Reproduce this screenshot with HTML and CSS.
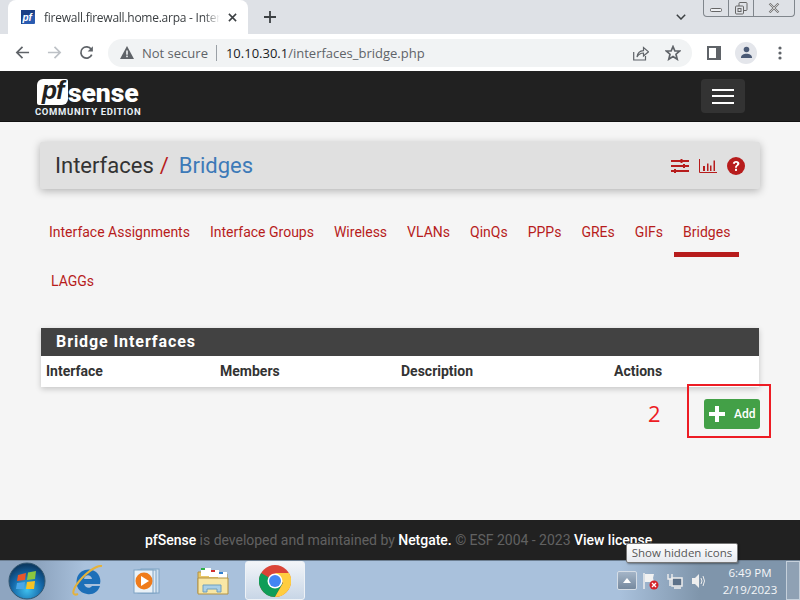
FILE: index.html
```html
<!DOCTYPE html>
<html lang="en">
<head>
<meta charset="utf-8">
<title>pfSense Bridges</title>
<link rel="stylesheet" href="styles.css">
</head>
<body>
<div class="screen">
  <div class="tabstrip">
    <div class="tab">
      <svg class="favicon" viewBox="0 0 14 14"><rect width="14" height="14" rx="1" fill="#2a5bb0"/><path d="M0 0H14L13 5H4L1 14H0Z" fill="#1b3f85"/><text x="1.5" y="11" class="fav-text">pf</text></svg>
      <span class="tab-title">firewall.firewall.home.arpa - Interf</span>
      <svg class="tab-close" viewBox="0 0 10 10"><path d="M1 1L9 9M9 1L1 9" stroke="#3c4043" stroke-width="1.7"/></svg>
    </div>
    <svg class="new-tab" viewBox="0 0 12 12"><path d="M6 0V12M0 6H12" stroke="#3c4043" stroke-width="1.8"/></svg>
    <div class="strip-fill"></div>
    <svg class="tab-menu" viewBox="0 0 10 6"><path d="M.8.8L5 5L9.2.8" fill="none" stroke="#3c4043" stroke-width="1.5"/></svg>
    <div class="window-btns">
      <div class="win-btn"><svg viewBox="0 0 12 4" class="win-min"><rect x=".5" y=".5" width="11" height="3" rx="1" fill="#eef0f3" stroke="#666"/></svg></div>
      <div class="win-btn"><svg viewBox="0 0 13 13" class="win-max"><rect x="4" y=".5" width="8" height="8" rx="1" fill="none" stroke="#666"/><rect x=".5" y="4" width="8" height="8" rx="1" fill="#dee1e6" stroke="#666"/><rect x="3" y="6.5" width="3" height="3" fill="none" stroke="#666"/></svg></div>
      <div class="win-btn win-close"><svg viewBox="0 0 12 10" class="win-x"><path d="M1.5 .5L10.5 9.5M10.5 .5L1.5 9.5" stroke="#777" stroke-width="2.2"/><path d="M1.5 .5L10.5 9.5M10.5 .5L1.5 9.5" stroke="#eee" stroke-width=".7"/></svg></div>
    </div>
  </div>

  <div class="toolbar">
    <svg class="tool-icon back" viewBox="0 0 16 16"><path d="M15 8H2M8 2L2 8L8 14" fill="none" stroke="#5f6368" stroke-width="1.8"/></svg>
    <svg class="tool-icon forward" viewBox="0 0 16 16"><path d="M1 8H14M8 2L14 8L8 14" fill="none" stroke="#bdc1c6" stroke-width="1.8"/></svg>
    <svg class="tool-icon reload" viewBox="0 0 16 16"><path d="M13.6 10.2A6 6 0 1 1 13 4.6" fill="none" stroke="#5f6368" stroke-width="1.8"/><path d="M14.8 1.2V6.8H9.2Z" fill="#5f6368"/></svg>
    <div class="omnibox">
      <svg class="warn" viewBox="0 0 14 13"><path d="M7 0L14 13H0Z" fill="#5f6368"/><rect x="6.2" y="4.5" width="1.6" height="4.2" fill="#f1f3f4"/><rect x="6.2" y="9.6" width="1.6" height="1.6" fill="#f1f3f4"/></svg>
      <span class="not-secure">Not secure</span>
      <span class="omni-sep"></span>
      <span class="url"><span class="url-host">10.10.30.1</span>/interfaces_bridge.php</span>
      <span class="omni-fill"></span>
      <svg class="share" viewBox="0 0 16 16"><path d="M.7 7V15H12.5V11" fill="none" stroke="#5f6368" stroke-width="1.2"/><path d="M4 12C4.5 8 7 5.8 10.5 5.6V2.5L15.5 6.8L10.5 11V8C8 8 5.5 9.5 4 12Z" fill="none" stroke="#5f6368" stroke-width="1.2"/></svg>
      <svg class="star" viewBox="0 0 16 16"><path d="M8 1.6L9.9 6H14.8L11 9.2L12.2 14.2L8 11.5L3.8 14.2L5 9.2L1.2 6H6.1Z" fill="none" stroke="#5f6368" stroke-width="1.7"/></svg>
    </div>
    <svg class="side-panel" viewBox="0 0 14 14"><path d="M0 0H14V14H0ZM2 2V12H9V2Z" fill="#5f6368" fill-rule="evenodd"/></svg>
    <div class="avatar"><svg viewBox="0 0 14 14" class="avatar-icon"><circle cx="7" cy="3.8" r="3" fill="#4b5a75"/><path d="M1 13C1 9.5 4 8.3 7 8.3S13 9.5 13 13Z" fill="#4b5a75"/></svg></div>
    <svg class="kebab" viewBox="0 0 4 14"><circle cx="2" cy="2" r="1.6" fill="#5f6368"/><circle cx="2" cy="7" r="1.6" fill="#5f6368"/><circle cx="2" cy="12" r="1.6" fill="#5f6368"/></svg>
  </div>

  <header class="navbar">
    <div class="logo">
      <div class="logo-top"><span class="logo-pf">pf</span><span class="logo-sense">sense</span></div>
      <div class="logo-sub">COMMUNITY EDITION</div>
    </div>
    <div class="hamburger"><i></i><i></i><i></i></div>
  </header>

  <main class="page">
    <div class="crumb-bar">
      <h1 class="crumbs">Interfaces<span class="crumb-slash">/</span><a class="crumb-link">Bridges</a></h1>
      <div class="crumb-icons">
        <svg class="ci-sliders" viewBox="0 0 18 14"><path d="M0 2H18M0 7H18M0 12H18" stroke="#b71c1c" stroke-width="2"/><path d="M9.5 0H11.5V4H9.5ZM12 5H14V9H12ZM3 10H5V14H3Z" fill="#b71c1c"/></svg>
        <svg class="ci-chart" viewBox="0 0 18 14"><path d="M.5 0V13.5H18" fill="none" stroke="#b71c1c"/><path d="M4 7H6V12H4ZM8 4.5H9.5V12H8ZM11 6.5H12.5V12H11ZM14.5 1.5H16V12H14.5Z" fill="#b71c1c"/></svg>
        <svg class="ci-help" viewBox="0 0 18 18"><circle cx="9" cy="9" r="9" fill="#b71c1c"/><path d="M5.8 6.6C6 4.8 7.3 3.9 9.1 3.9C11 3.9 12.4 5 12.4 6.6C12.4 8.900 9.900 8.800 9.900 10.800H8C8 8 10.200 8.100 10.200 6.700C10.200 6.100 9.700 5.700 9 5.700C8.300 5.700 7.900 6.100 7.700 7Z" fill="#fff"/><rect x="8" y="11.800" width="2" height="2.100" fill="#fff"/></svg>
      </div>
    </div>

    <nav class="tabs">
      <a class="tab-link">Interface Assignments</a>
      <a class="tab-link">Interface Groups</a>
      <a class="tab-link">Wireless</a>
      <a class="tab-link">VLANs</a>
      <a class="tab-link">QinQs</a>
      <a class="tab-link">PPPs</a>
      <a class="tab-link">GREs</a>
      <a class="tab-link">GIFs</a>
      <a class="tab-link is-active">Bridges</a>
      <a class="tab-link">LAGGs</a>
    </nav>

    <section class="panel">
      <h2 class="panel-title">Bridge Interfaces</h2>
      <div class="table-head">
        <span>Interface</span><span>Members</span><span>Description</span><span>Actions</span>
      </div>
    </section>

    <div class="actions">
      <button class="btn-add"><svg class="plus" viewBox="0 0 16 16"><path d="M8 0V16M0 8H16" stroke="#fff" stroke-width="4"/></svg>Add</button>
      <span class="anno-num">2</span>
      <span class="anno-box"></span>
    </div>
  </main>

  <footer class="footer"><b>pfSense</b> is developed and maintained by <b>Netgate.</b> © ESF 2004 - 2023 <b>View license.</b></footer>

  <div class="taskbar">
    <svg class="orb" viewBox="0 0 38 38">
      <defs><radialGradient id="orbg" cx=".5" cy=".75" r=".7"><stop offset="0" stop-color="#3fc0ee"/><stop offset=".6" stop-color="#1467a8"/><stop offset="1" stop-color="#0c3a63"/></radialGradient></defs>
      <circle cx="19" cy="19" r="18" fill="url(#orbg)" stroke="#33566f"/>
      <path d="M10 13L18 11L17 18L9 19Z" fill="#e8562a"/><path d="M20 10.500L28 9L27 17L19 18Z" fill="#8cc63f"/><path d="M9 21L17 20L16 27L8 27Z" fill="#4aa6e8"/><path d="M19 20L27 19L26 27L18 27Z" fill="#f7c325"/>
    </svg>
    <svg class="ie" viewBox="0 0 32 32"><path d="M26 9C21 2 8 3 5 13C3 21 7 28 15 29C21 30 26 27 28 21H20C18 24 13 23 12 19H28C29 15 28 12 26 9ZM12 14C13 9 19 9 20 14Z" fill="#1c6fb8"/><path d="M30 1C25 0 12 8 3 22C0 28 1 31 6 29" fill="none" stroke="#e5b23a" stroke-width="2"/></svg>
    <svg class="wmp" viewBox="0 0 28 28"><rect x="8" y="2" width="18" height="24" fill="#cfe0ef" stroke="#7fa3c4"/><rect x="5" y="3" width="18" height="23" fill="#dde9f3" stroke="#7fa3c4"/><rect x="1" y="3" width="19" height="23" fill="#e9f1f7" stroke="#7fa3c4"/><circle cx="11" cy="14" r="8.500" fill="#ef7b1a"/><path d="M8 9L16 14L8 19Z" fill="#fff"/></svg>
    <svg class="folder" viewBox="0 0 32 32"><path d="M1 7H12L14 9H30V28H1Z" fill="#e9c868" stroke="#b39245"/><rect x="4" y="3" width="10" height="8" fill="#fff"/><rect x="4" y="3" width="4" height="2" fill="#2fb14a"/><rect x="12" y="5" width="10" height="7" fill="#fff"/><rect x="14" y="5" width="4" height="2" fill="#d2302f"/><rect x="21" y="7" width="9" height="6" fill="#fff"/><rect x="22" y="7" width="4" height="2" fill="#2e7fd0"/><path d="M1 13H31V29H1Z" fill="#f8e7a6" stroke="#b39245"/><path d="M6 27V20H24V27H20V24H10V27Z" fill="#a9cfe7" stroke="#6f9fbd"/></svg>
    <div class="task-active">
      <svg class="chrome" viewBox="0 0 32 32"><circle cx="16" cy="16" r="16" fill="#db4437"/><path d="M16 16L2.100 8V8A16 16 0 0 0 16 32L24 18Z" fill="#0f9d58"/><path d="M16 8H30A16 16 0 0 1 16 32L24 18Z" fill="#ffcd40"/><circle cx="16" cy="16" r="7.500" fill="#fff"/><circle cx="16" cy="16" r="6" fill="#4285f4"/></svg>
    </div>
    <div class="task-fill"></div>
    <div class="tray-up"><svg viewBox="0 0 8 5" class="tray-caret"><path d="M4 0L8 5H0Z" fill="#fff"/></svg></div>
    <svg class="tray-flag" viewBox="0 0 16 18"><path d="M1 1V17" stroke="#eee" stroke-width="1.500"/><path d="M2 2H11L10 6L11 10H2Z" fill="#f2f2f2"/><circle cx="11" cy="13" r="4.500" fill="#d5232a"/><path d="M9 11L13 15M13 11L9 15" stroke="#fff" stroke-width="1.300"/></svg>
    <svg class="tray-net" viewBox="0 0 16 16"><rect x="5" y="5" width="10" height="8" fill="#5c7189" stroke="#eee" stroke-width="1.500"/><path d="M1 1V6H5V1M3 6V13M7 15H14" fill="none" stroke="#eee" stroke-width="1.400"/></svg>
    <svg class="tray-vol" viewBox="0 0 16 16"><path d="M1 5H4L8 1V15L4 11H1Z" fill="#eee"/><path d="M10 5Q12 8 10 11M12 3Q15 8 12 13" fill="none" stroke="#eee"/></svg>
    <div class="clock"><span>6:49 PM</span><span>2/19/2023</span></div>
    <div class="show-desktop"></div>
    <div class="tooltip">Show hidden icons</div>
  </div>
</div>
</body>
</html>
```

FILE: styles.css
```css
* { box-sizing: border-box; }
html, body { margin: 0; padding: 0; }
.screen { width: 800px; height: 600px; display: flex; flex-direction: column; overflow: hidden; font-family: Roboto, sans-serif; background: #f5f5f5; }

.tabstrip { height: 34px; background: #dee1e6; display: flex; align-items: flex-start; padding-left: 8px; flex: none; }
.tab { width: 240px; height: 34px; background: #fff; border-radius: 8px 8px 0 0; display: flex; align-items: center; padding: 0 11px 0 13px; }
.favicon { width: 14px; height: 14px; flex: none; }
.fav-text { font: italic 900 10px "Liberation Sans", sans-serif; fill: #fff; }
.tab-title { font: 12px "Open Sans", sans-serif; color: #3c4043; margin-left: 9px; width: 178px; flex: none; white-space: nowrap; letter-spacing: -.25px; -webkit-mask-image: linear-gradient(90deg, #000 160px, transparent 176px); mask-image: linear-gradient(90deg, #000 160px, transparent 176px); }
.tab-close { width: 9px; height: 9px; margin-left: 6px; flex: none; }
.new-tab { width: 12px; height: 12px; margin: 11px 0 0 16px; flex: none; }
.strip-fill { flex: 1; }
.tab-menu { width: 10px; height: 6px; margin: 14px 17px 0 0; flex: none; }
.window-btns { width: 92px; height: 17px; margin-right: 5px; display: flex; border: 1px solid #80868c; border-top: 0; border-radius: 0 0 4px 4px; flex: none; }
.win-btn { width: 25px; display: flex; align-items: center; justify-content: center; border-right: 1px solid #80868c; }
.win-close { flex: 1; border-right: 0; }
.win-min { width: 12px; height: 4px; margin-top: 4px; }
.win-max { width: 13px; height: 13px; }
.win-x { width: 12px; height: 10px; }

.toolbar { height: 37px; background: #fff; display: flex; align-items: center; flex: none; padding: 0 0 0 15px; }
.tool-icon { width: 15px; height: 15px; flex: none; }
.forward { margin-left: 17px; }
.reload { margin-left: 17px; }
.omnibox { width: 584px; height: 28px; margin-left: 14px; background: #f1f3f4; border-radius: 14px; display: flex; align-items: center; padding: 0 11px 0 12px; flex: none; }
.warn { width: 14px; height: 13px; flex: none; }
.not-secure { font: 13px "Open Sans", sans-serif; color: #5f6368; margin-left: 8px; white-space: nowrap; }
.omni-sep { width: 1px; height: 16px; background: #9aa0a6; margin: 0 9px 0 8px; flex: none; }
.url { font: 13px "Open Sans", sans-serif; color: #5f6368; white-space: nowrap; }
.url-host { color: #202124; }
.omni-fill { flex: 1; }
.share { width: 16px; height: 16px; flex: none; margin-right: 16px; }
.star { width: 16px; height: 16px; flex: none; }
.side-panel { width: 14px; height: 14px; margin-left: 15px; flex: none; }
.avatar { width: 22px; height: 22px; border-radius: 50%; background: #e4e6eb; margin-left: 14px; display: flex; align-items: center; justify-content: center; flex: none; }
.avatar-icon { width: 13px; height: 13px; }
.kebab { width: 4px; height: 14px; margin-left: 21px; flex: none; }

.navbar { height: 51px; background: #212121; border-bottom: 1px solid #111; display: flex; justify-content: space-between; align-items: flex-start; padding: 7px 55px 0 35px; flex: none; }
.logo { width: 106px; }
.logo-top { display: flex; align-items: flex-end; height: 27px; padding-left: 2px; }
.logo-pf { width: 31px; height: 26px; background: #fff; border-radius: 6px 2px 6px 2px; color: #212121; font: italic 900 25px/23px "Liberation Sans", sans-serif; text-align: center; letter-spacing: -1px; flex: none; }
.logo-sense { color: #fff; font: 900 26.5px/24px Roboto, sans-serif; letter-spacing: -.1px; }
.logo-sub { color: #e8f0f5; font: 700 9.5px/10px Roboto, sans-serif; letter-spacing: .65px; white-space: nowrap; margin-top: 2px; }
.hamburger { width: 44px; height: 34px; margin-top: 1px; background: #333; border-radius: 4px; display: flex; flex-direction: column; gap: 4.500px; align-items: center; justify-content: center; }
.hamburger i { display: block; width: 22px; height: 2px; background: #fff; }

.page { flex: 1; min-height: 0; padding: 20px 40px 0; position: relative; }
.crumb-bar { height: 47px; background: #e0e0e0; border-radius: 2px; box-shadow: 0 2px 8px rgba(0,0,0,.28); display: flex; align-items: center; justify-content: space-between; padding: 0 15px; }
.crumbs { margin: 0; font: 400 22px Roboto, sans-serif; color: #333; }
.crumb-slash { color: #b71c1c; margin: 0 10px 0 6px; }
.crumb-link { color: #3d7ab8; }
.crumb-icons { display: flex; align-items: center; }
.ci-sliders { width: 18px; height: 14px; margin-right: 10px; }
.ci-chart { width: 18px; height: 14px; margin-right: 10px; }
.ci-help { width: 18px; height: 18px; }

.tabs { display: flex; flex-wrap: wrap; margin-top: 19px; }
.tab-link { height: 49px; padding: 16px 9px 0; font: 14px/16px Roboto, sans-serif; color: #b71c1c; margin-right: 2px; border-bottom: 5px solid transparent; white-space: nowrap; }
.tab-link.is-active { border-bottom-color: #b71c1c; }
.tab-link:last-child { margin-left: 2px; }

.panel { margin: 22px 1px 0 1px; background: #fff; box-shadow: 0 2px 6px rgba(0,0,0,.2); }
.panel-title { margin: 0; height: 28px; background: #424242; color: #fff; font: 700 16px/28px Roboto, sans-serif; letter-spacing: .92px; padding-left: 15px; }
.table-head { height: 31px; padding: 0 0 2px 5px; display: grid; grid-template-columns: 174px 181px 213px 1fr; align-items: center; font: 700 14px Roboto, sans-serif; color: #333; }

.actions { display: flex; justify-content: flex-end; margin-top: 12px; position: relative; }
.btn-add { width: 56px; height: 30px; border: 0; border-radius: 3px; background: #43a047; color: #fff; font: 500 12px Roboto, sans-serif; display: flex; align-items: center; padding: 0 0 0 5px; }
.plus { width: 16px; height: 16px; margin-right: 9px; }
.anno-num { position: absolute; left: 608px; top: 0; color: #ed1c24; font: 22px/28px "Open Sans", sans-serif; }
.anno-box { position: absolute; left: 647px; top: -15px; width: 84px; height: 54px; border: 2px solid #ed1c24; }

.footer { height: 40px; background: #212121; color: #616161; font: 14px/40px Roboto, sans-serif; letter-spacing: -.02px; text-align: center; flex: none; padding-left: 1px; white-space: nowrap; }
.footer b { color: #fff; font-weight: 500; }

.taskbar { height: 40px; background: linear-gradient(90deg, #8ea5c0 0, #8ea5c0 40px, #a9c1dc 85px, #a9c1dc 620px, #7f95ab 700px, #7f95ab 100%); border-top: 1px solid #6d7f92; display: flex; align-items: center; position: relative; flex: none; }
.orb { width: 38px; height: 38px; margin-left: 8px; flex: none; }
.ie { width: 32px; height: 32px; margin-left: 26px; flex: none; }
.wmp { width: 28px; height: 28px; margin-left: 29px; flex: none; }
.folder { width: 32px; height: 32px; margin-left: 36px; flex: none; }
.task-active { width: 60px; height: 39px; margin-left: 16px; background: linear-gradient(180deg, #f2f5f9, #c8d6e6); border: 1px solid #eef2f6; border-radius: 3px; display: flex; align-items: center; justify-content: center; flex: none; }
.chrome { width: 32px; height: 32px; }
.task-fill { flex: 1; }
.tray-up { width: 20px; height: 19px; background: linear-gradient(180deg, #a4b5c8, #76899e); border: 1px solid #d5dde6; border-radius: 2px; display: flex; align-items: center; justify-content: center; flex: none; }
.tray-caret { width: 8px; height: 5px; }
.tray-flag { width: 16px; height: 18px; margin-left: 6px; flex: none; }
.tray-net { width: 16px; height: 16px; margin-left: 8px; flex: none; }
.tray-vol { width: 16px; height: 16px; margin-left: 8px; flex: none; }
.clock { width: 74px; margin-left: 5px; padding-left: 2px; display: flex; flex-direction: column; align-items: center; color: #f4f6f8; font: 11.500px/17px "Open Sans", sans-serif; flex: none; }
.show-desktop { width: 14px; height: 39px; background: #8fa1b4; border: 1px solid #c5d0db; flex: none; }
.tooltip { position: absolute; left: 626px; top: -18px; width: 112px; height: 20px; background: linear-gradient(180deg, #fff, #e6e9ef); border: 1px solid #767676; border-radius: 2px; box-shadow: 1px 1px 2px rgba(0,0,0,.4); color: #575757; font: 11.500px/18px "Open Sans", sans-serif; text-align: center; white-space: nowrap; }
```
